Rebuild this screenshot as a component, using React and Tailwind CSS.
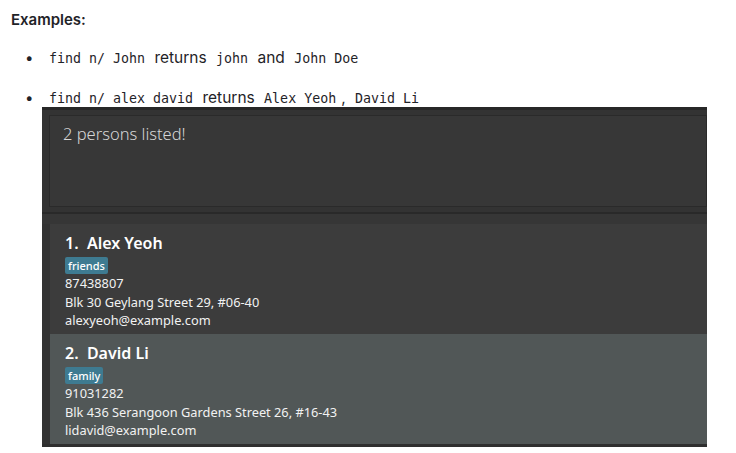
import React from 'react';

const persons = [
  {
    idx: 1,
    name: 'Alex Yeoh',
    tag: 'friends',
    phone: '87438807',
    address: 'Blk 30 Geylang Street 29, #06-40',
    email: 'alexyeoh@example.com',
    selected: false,
  },
  {
    idx: 2,
    name: 'David Li',
    tag: 'family',
    phone: '91031282',
    address: 'Blk 436 Serangoon Gardens Street 26, #16-43',
    email: 'lidavid@example.com',
    selected: true,
  },
];

const Code = ({ children }) => (
  <code className="px-[5px] font-['DejaVu_Sans_Mono',monospace] text-[13.3px] text-[#1f2328]">{children}</code>
);

const PersonCard = ({ p }) => (
  <div className={`h-[110px] pl-[15px] pt-[8px] ${p.selected ? 'bg-[#515757]' : 'bg-[#3c3c3c]'}`}>
    <div className="text-[16px] font-semibold leading-[22px] text-white">
      {p.idx}.&nbsp; {p.name}
    </div>
    <div className="mt-[3px] flex">
      <span className="rounded-[2px] bg-[#3e7b91] px-[3px] text-[11px] font-medium leading-[17px] text-white">
        {p.tag}
      </span>
    </div>
    <div className="text-[12.8px] leading-[18.5px] text-[#f2f2f2]">
      <div>{p.phone}</div>
      <div>{p.address}</div>
      <div>{p.email}</div>
    </div>
  </div>
);

export default function App() {
  return (
    <div className="h-[453px] w-[736px] overflow-hidden bg-white font-['Inter',sans-serif] text-[#1f2328]">
      <div className="pl-[11px] pt-[9px]">
        <h3 className="text-[15px] font-semibold leading-[22px]">Examples:</h3>
      </div>

      <ul className="mt-[17px] space-y-[20px] text-[15.5px]">
        <li className="flex h-[20px] items-center pl-[25px]">
          <span className="w-[19px] text-[15px]">•</span>
          <span>
            <Code>find n/ John</Code> returns <Code>john</Code> and <Code>John Doe</Code>
          </span>
        </li>
        <li className="flex h-[20px] items-center pl-[25px]">
          <span className="w-[19px] text-[15px]">•</span>
          <span>
            <Code>find n/ alex david</Code> returns <Code>Alex Yeoh</Code>, <Code>David Li</Code>
          </span>
        </li>
      </ul>

      {/* app screenshot */}
      <div className="ml-[42px] mt-[-1px] h-[340px] w-[665px] border-t-[3px] border-[#272727] bg-[#333333] font-['Noto_Sans',sans-serif]">
        <div className="ml-[7px] mt-[5px] h-[92px] border border-[#2a2a2a] bg-[#373737] pl-[13px] pt-[6px]">
          <p className="text-[16.5px] font-light text-[#d6d6d6]">2 persons listed!</p>
        </div>
        <div className="mt-[5px] h-[2px] bg-[#292929]" />
        <div className="h-[10px] bg-[#363636]" />
        <div className="bg-[#333333] pl-[8px]">
          {persons.map((p) => (
            <PersonCard key={p.idx} p={p} />
          ))}
        </div>
        <div className="h-[3px] bg-[#2f2f2f]" />
      </div>
    </div>
  );
}
